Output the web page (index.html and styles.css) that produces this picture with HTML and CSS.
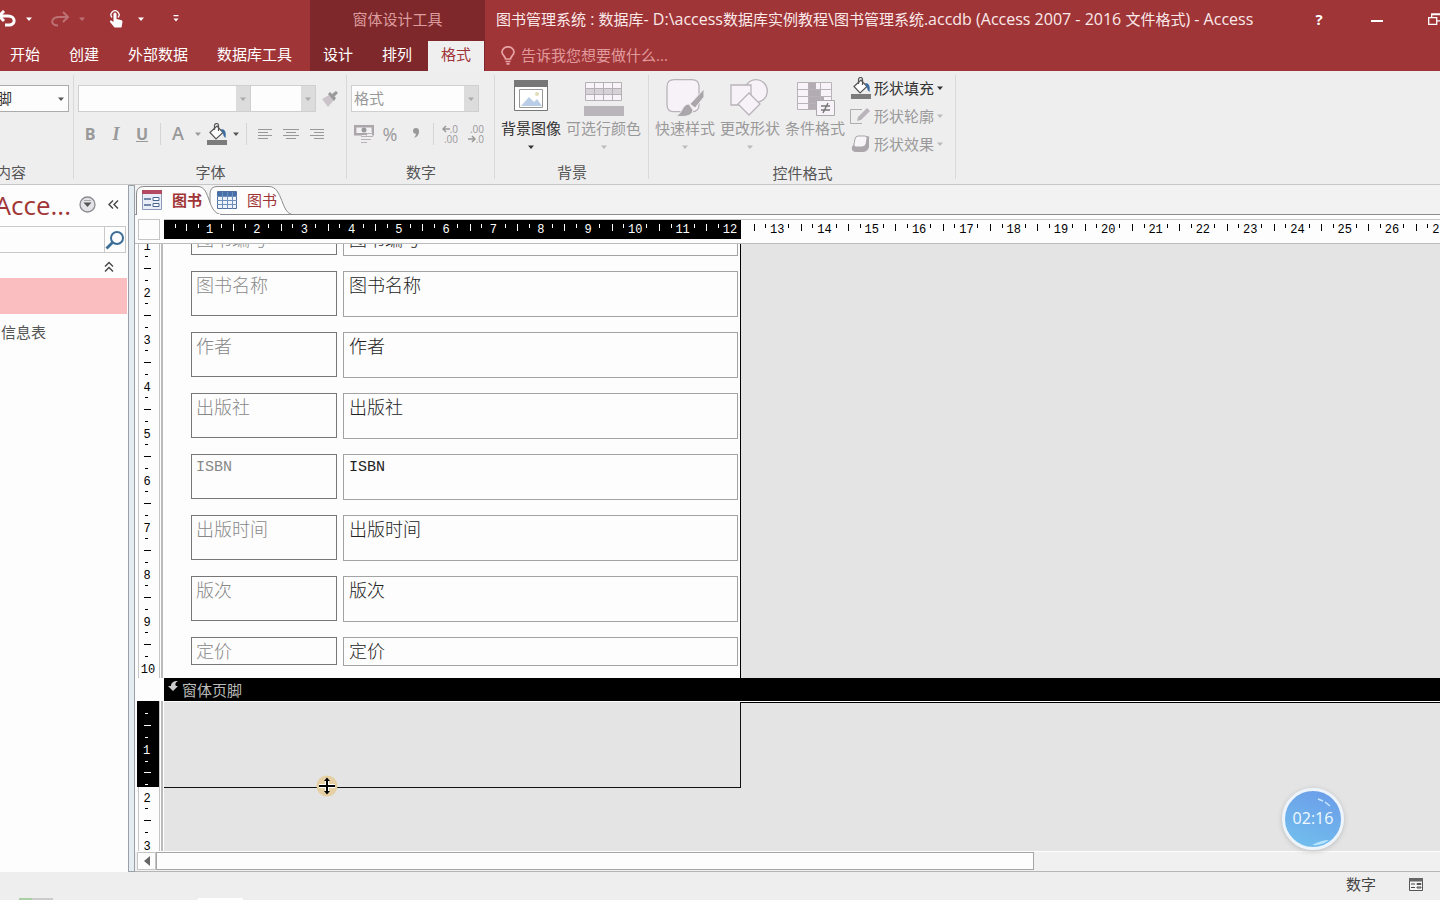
FILE: index.html
```html
<!DOCTYPE html>
<html lang="zh-CN">
<head>
<meta charset="utf-8">
<title>图书管理系统 - Access</title>
<link rel="stylesheet" href="styles.css">
</head>
<body>
<svg class="symbols" aria-hidden="true">
  <symbol id="caret" viewBox="0 0 8 8"><path d="M1 2.5h6L4 6z" fill="currentColor"/></symbol>
  <symbol id="bucket" viewBox="0 0 22 22"><path d="M4 9.5 11 3l6 6.500-7 6.500z" fill="#fff" stroke="#555" stroke-width="1.200"/><path d="M8.500 7V2.500a2 2 0 0 1 4 0V8" fill="none" stroke="#555" stroke-width="1.200"/><path d="M15 6c4 0 5.500 3 4.500 9-1.500-1-2.500-3-2.500-5z" fill="#3c6ea5"/><path d="M1 17h20v5H1z" fill="#7b7b7b"/></symbol>
</svg>

<header class="titlebar">
  <div class="title-left">
    <div class="quick">
      <div class="quick-group">
        <button aria-label="撤消"><svg width="16" height="18" viewBox="0 0 16 18" fill="none" stroke="#fff" stroke-width="3"><path d="M-1 6h9c8 0 8 9 1 9H5M4 1-1 6l5 5"/></svg></button>
        <button aria-label="撤消选项"><svg width="8" height="8"><use href="#caret"/></svg></button>
      </div>
      <div class="quick-group faded">
        <button aria-label="恢复"><svg width="18" height="18" viewBox="0 0 18 18" fill="none" stroke="#fff" stroke-width="2"><path d="M17 7H9C-1 7-1 15.500 7 15.500M12 2l5 5-5 5"/></svg></button>
        <button aria-label="恢复选项"><svg width="8" height="8"><use href="#caret"/></svg></button>
      </div>
      <div class="quick-group">
        <button class="touch" aria-label="触摸模式"><svg width="14" height="18" viewBox="0 0 14 18" fill="#fff"><path d="M4.500 4a1.500 1.500 0 0 1 3 0v5l4.500 1c1 .3 1.500 1 1.500 2l-1 5.500H5.500L1 12c-.5-1 .8-2 2-1l1.500 1z"/><path d="M3 7.500a4 4 0 1 1 6 0" fill="none" stroke="#fff" stroke-width="1.300"/></svg></button>
        <button aria-label="触摸选项"><svg width="8" height="8"><use href="#caret"/></svg></button>
      </div>
      <button class="customize" aria-label="自定义快速访问工具栏"><svg width="8" height="8" viewBox="0 0 8 8" fill="#fff"><path d="M1.500 0h5v1.200h-5zM1.500 3.500h5L4 6.500z"/></svg></button>
    </div>
    <nav class="tabs left-tabs">
      <button>开始</button><button>创建</button><button>外部数据</button><button>数据库工具</button>
    </nav>
  </div>
  <div class="title-context">
    <div class="context-name">窗体设计工具</div>
    <nav class="tabs context-tabs">
      <button>设计</button><button>排列</button><button class="active">格式</button>
    </nav>
  </div>
  <div class="title-right">
    <div class="title-row">
      <h1>图书管理系统<span> : </span>数据库<span>- D:\access</span>数据库实例教程<span>\</span>图书管理系统<span>.accdb (Access 2007 - 2016 </span>文件格式<span>) - Access</span></h1>
      <div class="window-buttons">
        <button aria-label="帮助" class="help">?</button>
        <button aria-label="最小化"><svg width="12" height="12" viewBox="0 0 12 12"><path d="M0 7h12v2H0z" fill="#fff"/></svg></button>
        <button aria-label="还原"><svg width="14" height="12" viewBox="0 0 14 12" fill="none" stroke="#fff" stroke-width="1.300"><path d="M.7 4.700h8v6.600h-8zM3.700 4.500V.8h9v7H9M4 1.500h8"/></svg></button>
      </div>
    </div>
    <label class="tell"><svg width="14" height="19" viewBox="0 0 14 19" fill="none" stroke="#e7a3a5" stroke-width="1.700"><path d="M4.500 13c0-3-3.500-3.500-3.500-7a6 5.200 0 0 1 12 0c0 3.500-3.500 4-3.500 7zM4.500 15.500h5M5.500 17.800h3"/></svg><input type="text" placeholder="告诉我您想要做什么..." aria-label="告诉我您想要做什么"></label>
  </div>
</header>

<section class="ribbon" aria-label="格式">
  <div class="group g-select">
    <div class="row"><span class="combo live"><select aria-label="所选内容"><option>脚</option></select><i><svg width="8" height="8"><use href="#caret"/></svg></i></span></div>
    <div class="group-name">内容</div>
  </div>
  <div class="group g-font">
    <div class="row">
      <span class="combo font-name"><select aria-label="字体" disabled><option></option></select><i><svg width="8" height="8"><use href="#caret"/></svg></i></span><span class="combo font-size"><select aria-label="字号" disabled><option></option></select><i><svg width="8" height="8"><use href="#caret"/></svg></i></span>
      <button class="painter" aria-label="格式刷" disabled><svg width="18" height="18" viewBox="0 0 18 18"><path d="M1 9 8 5l5 5-6 7z" fill="#cbc5c9"/><path d="m7 4 2-2 6 6-2 3z" fill="#999"/><path d="m11 4 4-3 2 2-4 4z" fill="#999"/></svg></button>
    </div>
    <div class="tools">
      <button class="tool letter bold" disabled>B</button><button class="tool letter italic" disabled>I</button><button class="tool letter underline" disabled>U</button>
      <span class="sep"></span>
      <button class="tool letter big" disabled>A</button><button class="drop" disabled aria-label="字体颜色"><svg width="8" height="8"><use href="#caret"/></svg></button>
      <button class="tool fill" aria-label="背景色"><svg width="22" height="22"><use href="#bucket"/></svg></button><button class="drop dark" aria-label="背景色选项"><svg width="8" height="8"><use href="#caret"/></svg></button>
      <span class="sep"></span>
      <button class="tool" disabled aria-label="左对齐"><svg width="16" height="14" viewBox="0 0 16 14" stroke="#999"><path d="M1 2.500h14M1 5.500h10M1 8.500h14M1 11.500h10"/></svg></button><button class="tool" disabled aria-label="居中"><svg width="16" height="14" viewBox="0 0 16 14" stroke="#999"><path d="M0 2.500h16M3 5.500h10M0 8.500h16M3 11.500h10"/></svg></button><button class="tool" disabled aria-label="右对齐"><svg width="16" height="14" viewBox="0 0 16 14" stroke="#999"><path d="M1 2.500h14M5 5.500h10M1 8.500h14M5 11.500h10"/></svg></button>
    </div>
    <div class="group-name">字体</div>
  </div>
  <div class="group g-number">
    <div class="row"><span class="combo number-format"><select aria-label="格式" disabled><option>格式</option></select><i><svg width="8" height="8"><use href="#caret"/></svg></i></span></div>
    <div class="tools">
      <button class="tool" disabled aria-label="货币"><svg width="20" height="20" viewBox="0 0 20 20"><path d="M1.200 2.200h17.600v8H1.200z" fill="#f3f1f3" stroke="#aaa6aa" stroke-width="2.400"/><circle cx="10" cy="6" r="2.500" fill="#999"/><path d="M8 11h4v8H8zM13 8h5v8h-5z" fill="#eee"/><path d="M7 12.500h6M7 15.500h6M7 18.500h6M13 9.500h6M13 12.500h6M13 15.500h4" stroke="#b9b3b9"/></svg></button><button class="tool percent" disabled>%</button><button class="tool" disabled aria-label="千位分隔"><svg width="8" height="12" viewBox="0 0 8 12"><path d="M1 3a3 3 0 0 1 6 0c0 4-2 6-5 7 1.500-2 2-3 1.800-4.200C2 5.800 1 4.500 1 3z" fill="#999"/></svg></button>
      <span class="sep"></span>
      <button class="tool decimals" disabled aria-label="增加小数位数"><span><svg width="8" height="8" viewBox="0 0 8 8" fill="none" stroke="#999" stroke-width="1.500"><path d="M8 4H1m3-3L1 4l3 3"/></svg>.0</span><span>.00</span></button><button class="tool decimals" disabled aria-label="减少小数位数"><span>.00</span><span><svg width="8" height="8" viewBox="0 0 8 8" fill="none" stroke="#999" stroke-width="1.500"><path d="M0 4h7M4 1l3 3-3 3"/></svg>.0</span></button>
    </div>
    <div class="group-name">数字</div>
  </div>
  <div class="group g-back">
    <div class="bigs">
      <button class="big-button"><svg width="40" height="38" viewBox="0 0 40 38"><path d="M3.500 3.500h33v28h-33z" fill="#fff" stroke="#777"/><path d="M3 1h34v7H3z" fill="#777"/><path d="M8.500 10.500h23v18h-23z" fill="#fff" stroke="#999"/><path d="m10 27 8-9 5 5 3-3 5 7z" fill="#b9cde6"/><circle cx="26" cy="15" r="2" fill="#e2dcb8"/></svg>背景图像<svg width="8" height="8"><use href="#caret"/></svg></button>
      <button class="big-button" disabled><svg width="40" height="38" viewBox="0 0 40 38"><path d="M1.500 3.500h36v18h-36z" fill="#f8f3f8"/><path d="M2 9h35v6H2z" fill="#d6d2d6"/><path d="M1.500 3.500h36v18h-36zM1 9.500h37M1 15.500h37M10.500 3v19M19.500 3v19M28.500 3v19" fill="none" stroke="#b5b0b5"/><path d="M0 27h40v10H0z" fill="#bab5ba"/></svg>可选行颜色<svg width="8" height="8"><use href="#caret"/></svg></button>
    </div>
    <div class="group-name">背景</div>
  </div>
  <div class="group g-control">
    <div class="bigs">
      <button class="big-button" disabled><svg width="40" height="38" viewBox="0 0 40 38"><path d="M9 .7h18q7 0 7 7v18q0 7-7 7H9q-7 0-7-7v-18q0-7 7-7z" fill="#f7f2f7" stroke="#b9b3b9" stroke-width="1.300"/><path d="M39 10v8l-9 11-5-4z" fill="#aaa6aa" stroke="#eee"/><path d="M24 25c-7 0-6 9-13 12 7 1 16 1 17-6z" fill="#aaa6aa" stroke="#eee"/></svg>快速样式<svg width="8" height="8"><use href="#caret"/></svg></button>
      <button class="big-button" disabled><svg width="40" height="38" viewBox="0 0 40 38" fill="#f7f2f7" stroke="#b9b3b9" stroke-width="1.300"><circle cx="26" cy="12" r="11.300"/><path d="M1 6h20v20H1z"/><path d="m19 14 11 11-11 11L8 25z"/></svg>更改形状<svg width="8" height="8"><use href="#caret"/></svg></button>
      <button class="big-button" disabled><svg width="40" height="38" viewBox="0 0 40 38"><path d="M2.500 3.500h34v27h-34z" fill="#f8f3f8"/><path d="M13 3h8v7h4v7h4v7h-8v7h-8z" fill="#b3adb3"/><path d="M2.500 3.500h34v27h-34zM2 10.500h34M2 17.500h34M2 24.500h34M13.500 3v28M25.500 3v28" fill="none" stroke="#b9b3b9"/><path d="M21.500 21.500h18v15h-18z" fill="#f8f3f8" stroke="#aaa"/><path d="M26 27h9M26 31h9M33 24l-5 10" stroke="#777" stroke-width="1.500"/></svg>条件格式</button>
      <div class="shape-list">
        <button><svg width="22" height="22"><use href="#bucket"/></svg>形状填充<svg width="8" height="8"><use href="#caret"/></svg></button>
        <button disabled><svg width="22" height="22" viewBox="0 0 22 22" fill="none" stroke="#b0abb0"><path d="M12 4.500H.5v14H12"/><path d="m7 16 1-4 9-9 3 3-9 9z" fill="#b9b4b9" stroke="none"/></svg>形状轮廓<svg width="8" height="8"><use href="#caret"/></svg></button>
        <button disabled><svg width="22" height="22" viewBox="0 0 22 22"><path d="M8 3h9q3 0 2 3v8q-1 4-5 5H5q-4-1-3-5z" fill="#aaa6aa"/><path d="M8 3h7q3 0 2 3l-1 5q-1 3-4 3H6q-3 0-2-3l1-5q.5-3 3-3z" fill="#f8f5f8" stroke="#aaa6aa"/></svg>形状效果<svg width="8" height="8"><use href="#caret"/></svg></button>
      </div>
    </div>
    <div class="group-name">控件格式</div>
  </div>
</section>

<main>
  <aside class="nav-pane">
    <div class="nav-head">
      <h2>Acce...</h2>
      <button aria-label="浏览类别"><svg width="17" height="17" viewBox="0 0 17 17"><circle cx="8.500" cy="8.500" r="7.500" fill="#e4e4e8" stroke="#8b8b90" stroke-width="1.300"/><path d="M4.500 6.500h8l-4 4.500z" fill="#555"/><path d="M5 4.500h7" stroke="#aaa"/></svg></button>
      <button aria-label="折叠导航窗格"><svg width="11" height="11" viewBox="0 0 11 11" fill="none" stroke="#444" stroke-width="1.400"><path d="M5 1.500 1 5.500l4 4M10 1.500l-4 4 4 4"/></svg></button>
    </div>
    <div class="search">
      <input type="text" aria-label="搜索">
      <button aria-label="搜索"><svg width="20" height="20" viewBox="0 0 20 20" fill="none" stroke="#3d6e98"><circle cx="12" cy="8" r="6" stroke-width="2"/><path d="m7.500 12.500-6 6" stroke-width="2.800"/></svg></button>
    </div>
    <button class="nav-group" aria-label="表"><svg width="10" height="12" viewBox="0 0 10 12" fill="none" stroke="#444" stroke-width="1.400"><path d="m1 5.500 4-4 4 4M1 10.500l4-4 4 4"/></svg></button>
    <button class="nav-item selected" aria-label="图书"></button>
    <button class="nav-item">信息表</button>
  </aside>
  <div class="splitter"></div>

  <section class="workspace">
    <div class="doc-tabs">
      <svg class="tab-shapes" width="170" height="30" viewBox="0 0 170 30" fill="#fdfdfd" stroke="#8c8c8c"><path d="M74 29.500V9q0-7.500 7-7.500h52c14 0 12 28 24 28z"/><path d="M.5 30.500V9Q.5 1.500 8 1.500h54c13 0 9 28 24 28V31z"/><path d="M1 30h83" stroke="#fdfdfd" stroke-width="2"/></svg>
      <button class="doc-tab current"><svg width="20" height="20" viewBox="0 0 20 20"><path d="M.5.5h19v19H.5z" fill="#e8edf7" stroke="#8c9ab8"/><path d="M0 0h20v4H0z" fill="#b34a61"/><path d="M2 9h7M2 15h7" stroke="#4c658f" stroke-width="1.500"/><path d="M11 7.500h6v3h-6zM11 13.500h6v3h-6z" fill="#fff" stroke="#4c658f"/></svg>图书</button>
      <button class="doc-tab"><svg width="20" height="18" viewBox="0 0 20 18"><path d="M.5.5h19v17H.5z" fill="#eff4fb" stroke="#53719f"/><path d="M1 1h18v4H1z" fill="#4770aa"/><path d="M0 5.500h20M0 9.500h20M0 13.500h20M5.500 1v17M10.500 1v17M15.500 1v17" stroke="#6e8fba"/></svg>图书</button>
    </div>
    <div class="ruler-row">
      <div class="corner"></div>
      <div class="ruler-h">
        <div class="ruler-used"></div>
        <div class="marks"><span class="origin"></span><b>1</b><b>2</b><b>3</b><b>4</b><b>5</b><b>6</b><b>7</b><b>8</b><b>9</b><b>10</b><b>11</b><b>12</b><b class="ink">13</b><b class="ink">14</b><b class="ink">15</b><b class="ink">16</b><b class="ink">17</b><b class="ink">18</b><b class="ink">19</b><b class="ink">20</b><b class="ink">21</b><b class="ink">22</b><b class="ink">23</b><b class="ink">24</b><b class="ink">25</b><b class="ink">26</b><b class="ink">27</b></div>
      </div>
    </div>
    <div class="design">
      <div class="section detail-section">
        <div class="ruler-v"><b>1</b><b>2</b><b>3</b><b>4</b><b>5</b><b>6</b><b>7</b><b>8</b><b>9</b><b class="last">10</b></div>
        <form class="detail">
          <div class="field first"><label for="f0">图书编号</label><input id="f0" value="图书编号"></div>
          <div class="field"><label for="f1">图书名称</label><input id="f1" value="图书名称"></div>
          <div class="field"><label for="f2">作者</label><input id="f2" value="作者"></div>
          <div class="field"><label for="f3">出版社</label><input id="f3" value="出版社"></div>
          <div class="field latin"><label for="f4">ISBN</label><input id="f4" value="ISBN"></div>
          <div class="field"><label for="f5">出版时间</label><input id="f5" value="出版时间"></div>
          <div class="field"><label for="f6">版次</label><input id="f6" value="版次"></div>
          <div class="field short"><label for="f7">定价</label><input id="f7" value="定价"></div>
        </form>
      </div>
      <div class="section bar-section">
        <div class="ruler-gap"></div>
        <div class="section-bar"><svg width="11" height="11" viewBox="0 0 11 11"><path d="M0 6h3c0-3 2-5 7-5-3 2-3 3-2 5h2l-5 5z" fill="#ccc"/></svg>窗体页脚</div>
      </div>
      <div class="section footer-section">
        <div class="ruler-v footer-ruler"><div class="ruler-active"><span class="lead"></span><b>1</b></div><b>2</b><b>3</b></div>
        <div class="footer-canvas"><div class="footer-area"></div><svg class="cursor" width="24" height="24" viewBox="0 0 24 24"><circle cx="12" cy="12" r="10.500" fill="#e5cfa3"/><path d="M4 12h16M12 5v14" stroke="#fff" stroke-width="4"/><path d="M4 12h16M12 5v14" stroke="#000" stroke-width="2"/><path d="m9 7 3-3.500L15 7zM9 17l3 3.500 3-3.500z"/></svg></div>
      </div>
    </div>
    <div class="scrollbar"><button aria-label="向左滚动"><svg width="6" height="10" viewBox="0 0 6 10"><path d="M6 0v10L0 5z" fill="#666"/></svg></button><div class="thumb"></div></div>
    <div class="timer">02:16<svg width="56" height="56" viewBox="0 0 56 56" fill="none" stroke="#c9e8ff"><path d="m33 8 5 2m2 1 5 4" stroke-width="1.500"/><path d="M27 54q10-5 17-5-7 6-17 5z" fill="#b9e6ff" stroke="none"/></svg></div>
  </section>
</main>

<footer class="status">
  <span>数字</span>
  <button aria-label="窗体视图"><svg width="14" height="13" viewBox="0 0 14 13"><path d="M.5.500h13v12H.5z" fill="#f5f5f5" stroke="#555"/><path d="M0 0h14v3.500H0z" fill="#666"/><path d="M2 6h4M2 9.500h4" stroke="#444"/><path d="M8 5.500h4v1H8zM8 9h4v1H8z" stroke="#555" fill="none"/></svg></button>
</footer>
</body>
</html>
```

FILE: styles.css
```css
* { box-sizing: border-box; }

body {
  margin: 0;
  height: 100vh;
  overflow: hidden;
  display: flex;
  flex-direction: column;
  background: #ededed;
  color: #444;
  font: 15px/20px "Open Sans", "Noto Sans CJK SC", sans-serif;
}

button, input, select { font: inherit; color: inherit; }
button { margin: 0; padding: 0; border: 0; background: none; display: flex; align-items: center; justify-content: center; }
button:disabled { color: #999; }
svg { display: block; flex: none; }
.symbols { position: absolute; width: 0; height: 0; }
h1, h2 { margin: 0; font-weight: 400; }

/* Title bar and ribbon tabs */
.titlebar { display: flex; flex: none; background: #a03538; color: #fff; overflow: hidden; }
.title-left { width: 310px; }
.quick { height: 39px; display: flex; align-items: center; gap: 18px; padding-bottom: 1px; }
.quick-group { display: flex; align-items: center; gap: 9px; }
.faded { opacity: .3; }
.touch { width: 24px; }
.customize { width: 26px; }
.tabs { display: flex; height: 32px; }
.tabs button { padding-bottom: 3px; }
.left-tabs { padding-left: 10px; gap: 29px; }
.title-context { width: 175px; background: #7f282b; display: flex; flex-direction: column; }
.context-name { height: 41px; line-height: 39px; text-align: center; color: #dc9c9e; }
.context-tabs { height: 30px; gap: 3px; }
.context-tabs button { padding: 0 13px 4px; }
.context-tabs .active { background: #f0eff0; color: #a03538; }
.title-right { flex: 1; min-width: 0; }
.title-row { height: 39px; display: flex; align-items: center; justify-content: space-between; padding: 0 0 2px 11px; }
.title-row h1 { font-size: 15px; color: #fbe9e9; white-space: nowrap; }
.title-row h1 span { font-size: 16px; }
.window-buttons { display: flex; flex: none; margin-right: -24px; }
.window-buttons button { width: 58px; height: 38px; }
.help { font-weight: 700; }
.tell { display: flex; align-items: center; gap: 6px; height: 32px; padding-left: 16px; }
.tell input { width: 240px; padding: 0; border: 0; background: none; }
.tell input::placeholder { color: #e09a9c; opacity: 1; }

/* Ribbon */
.ribbon { display: flex; flex: none; height: 114px; border-bottom: 1px solid #c6c6c6; background: #efeeef; }
.group { display: flex; flex-direction: column; padding: 14px 4px 2px; background: linear-gradient(#d9d9d9, #d9d9d9) right 4px / 1px 104px no-repeat; }
.group-name { margin-top: auto; text-align: center; color: #555; }
.row { display: flex; height: 27px; align-items: center; }
.g-select { width: 74px; padding-left: 0; }
.g-select .group-name { text-align: left; margin-left: -4px; }
.g-font { width: 273px; }
.g-number { width: 148px; }
.g-back { width: 154px; padding: 8px 6px 2px; }
.g-control { width: 307px; padding: 8px 6px 2px; }
.combo { display: flex; height: 27px; border: 1px solid #cfcfcf; background: #fdfdfd; }
.combo select { flex: 1; min-width: 0; padding: 0 2px 2px; border: 0; background: none; appearance: none; color: #999; opacity: 1; }
.combo i { width: 14px; display: flex; align-items: center; justify-content: center; background: #dcdcdc; color: #aaa; }
.combo.live { width: 73px; margin-left: -4px; border-color: #ababab; }
.combo.live select { color: #333; padding: 0 0 2px; }
.combo.live i { background: none; color: #555; }
.font-name { width: 173px; }
.font-size { width: 65px; border-left: 0; }
.number-format { width: 128px; }
.painter { margin-left: 5px; }
.tools { display: flex; align-items: center; height: 44px; }
.tool { width: 26px; height: 26px; }
.sep { width: 1px; height: 22px; margin: 0 5px 0 4px; background: #d5d5d5; }
.drop { width: 12px; height: 26px; }
.dark { color: #555; }
.letter { font-size: 16px; font-weight: 700; padding-right: 2px; }
.italic { font-family: "Liberation Serif", serif; font-style: italic; font-size: 18px; }
.underline { text-decoration: underline; }
.big { font-size: 18px; font-weight: 600; padding-bottom: 3px; }
.percent { font-size: 18px; }
.decimals { flex-direction: column; align-items: flex-end; padding-right: 7px; font-size: 10px; line-height: 10px; }
.decimals span { display: flex; align-items: center; }
.bigs { display: flex; gap: 5px; }
.big-button { flex-direction: column; justify-content: flex-start; color: #333; }
.big-button svg:first-child { height: 38px; margin-bottom: 1px; }
.big-button svg:last-child { margin-top: 5px; }
.big-button svg:only-child { margin-top: 0; }
.big-button:disabled svg:last-child, .shape-list button:disabled svg:last-child { color: #bbb; }
.shape-list { display: flex; flex-direction: column; }
.shape-list button { height: 28px; padding-bottom: 10px; color: #333; gap: 2px; }
.shape-list button:disabled { color: #999; }

/* Navigation pane */
main { flex: 1; min-height: 0; display: flex; }
.nav-pane { width: 128px; flex: none; background: #fdfdfd; overflow: hidden; display: flex; flex-direction: column; }
.nav-head { height: 41px; display: flex; align-items: center; justify-content: flex-end; gap: 6px; padding: 0 5px 2px 0; }
.nav-head button { width: 20px; flex: none; }
.nav-head h2 { flex: none; font-size: 26px; line-height: 36px; color: #a03538; }
.search { display: flex; height: 27px; margin-right: 2px; border: 1px solid #c9c9c9; border-left: 0; }
.search input { flex: 1; min-width: 0; border: 0; background: none; }
.search button { width: 21px; border-left: 1px solid #c9c9c9; }
.nav-group { align-self: flex-end; width: 38px; height: 25px; padding-top: 3px; }
.nav-item { height: 36px; margin-right: 1px; padding-left: 1px; justify-content: flex-start; color: #555; }
.selected { background: #fabec1; }
.splitter { width: 7px; flex: none; border: 1px solid #9aa0a8; background: #e6edf2; }

/* Document area */
.workspace { flex: 1; min-width: 0; display: flex; flex-direction: column; position: relative; background: #fdfdfd; overflow: hidden; }
.doc-tabs { position: relative; height: 30px; flex: none; display: flex; align-items: center; border-bottom: 1px solid #8c8c8c; background: #f3f2f3; }
.tab-shapes { position: absolute; left: 1px; top: 0; }
.doc-tab { position: relative; gap: 10px; width: 75px; color: #a03538; justify-content: flex-start; margin-left: 7px; }
.doc-tab + .doc-tab { margin-left: 0; }
.current { font-weight: 700; }
.ruler-row { display: flex; flex: none; height: 29px; padding: 4px 0 0 3px; border-bottom: 1px solid #bbb; }
.corner { width: 22px; height: 21px; margin-right: 4px; flex: none; border: 1px solid #c5c5c5; }
.ruler-h { flex: 1; min-width: 0; height: 20px; position: relative; overflow: hidden; border-top: 1px solid #c5c5c5; }
.ruler-used { position: absolute; left: 0; top: -1px; width: 577px; height: 20px; background: #000; }
.marks { position: relative; display: flex; width: 1299px; height: 20px; color: #fff; }
.marks .origin { width: 22px; flex: none; background: linear-gradient(#fff, #fff) 50% 4px / 1px 4px no-repeat; }
.marks b { flex: 1; text-align: center; font: 12px/20px "Liberation Mono", monospace; background: linear-gradient(currentColor, currentColor) 0 4px / 1px 7px no-repeat, linear-gradient(currentColor, currentColor) 25% 4px / 1px 4px no-repeat, linear-gradient(currentColor, currentColor) 75% 4px / 1px 4px no-repeat; }
.marks .ink { color: #000; }

.design { flex: 1; min-height: 0; display: flex; flex-direction: column; background: #e4e4e4; overflow: hidden; }
.section { display: flex; }
.detail-section { height: 434px; flex: none; }
.ruler-v { width: 29px; flex: none; display: flex; flex-direction: column; justify-content: flex-end; overflow: hidden; color: #000; background: linear-gradient(90deg, #fdfdfd 3px, #c5c5c5 3px 4px, #fdfdfd 4px 24px, #c5c5c5 24px 25px, #fdfdfd 25px 26px, #bbb 26px 28px, #fdfdfd 28px); }
.ruler-v b, .lead { height: 47px; flex: none; font: 12px/14px "Liberation Mono", monospace; text-align: center; padding-right: 5px; background: linear-gradient(currentColor, currentColor) 10px 16px / 3px 1px no-repeat, linear-gradient(currentColor, currentColor) 9px 28px / 7px 1px no-repeat, linear-gradient(currentColor, currentColor) 10px 40px / 3px 1px no-repeat; }
.ruler-v .last { height: 15px; padding-right: 3px; background: none; }
.detail { width: 577px; flex: none; display: flex; flex-direction: column; justify-content: flex-end; gap: 15px; padding: 0 2px 12px 27px; border-right: 1px solid #000; background: #fdfdfd; overflow: hidden; }
.field { display: grid; grid-template-columns: 146px 1fr; gap: 6px; height: 46px; flex: none; align-items: start; font: 300 18px/24px "Noto Sans CJK SC", sans-serif; }
.field label { height: 45px; padding: 0 4px; border: 1px solid #777; color: #888; }
.field input { width: 100%; height: 46px; margin: 0; padding: 0 5px 20px; border: 1px solid #a3a3a3; border-radius: 0; background: none; color: #222; }
.short, .short input { height: 29px; }
.short input { padding-bottom: 3px; }
.short label { height: 28px; }
.first, .first input { height: 31px; }
.first input { padding-bottom: 5px; }
.first label { height: 30px; }
.latin label, .latin input { font-family: "Liberation Mono", monospace; font-size: 15px; line-height: 26px; }
.bar-section { height: 23px; flex: none; }
.ruler-gap { width: 29px; flex: none; background: #fdfdfd; }
.section-bar { flex: 1; display: flex; gap: 3px; padding: 2px 4px; background: #000; color: #bbb; }
.footer-section { flex: 1; min-height: 0; }
.footer-ruler { justify-content: flex-start; }
.ruler-active { display: flex; flex-direction: column; margin: 0 5px 0 2px; height: 86px; flex: none; overflow: hidden; background: #000; color: #fff; }
.ruler-active b { padding-right: 3px; background-position: 8px 17px, 7px 28px, 8px 40px; }
.lead { height: 43px; background-position: 8px 12px, 7px 24px, 8px 36px; }
.footer-ruler > b { margin-top: 5px; height: 43px; }
.footer-canvas { flex: 1; position: relative; border-top: 1px solid #fdfdfd; background: linear-gradient(#000, #000) 577px 0 / 100% 1px no-repeat; }
.footer-area { width: 577px; height: 86px; border: solid #111; border-width: 0 1px 1px 0; }
.cursor { position: absolute; left: 151px; top: 72px; }
.scrollbar { flex: none; display: flex; height: 21px; padding: 0 0 1px 2px; border-bottom: 1px solid #b5b5b5; border-top: 1px solid #fdfdfd; background: #f0f0f0; }
.scrollbar button { width: 19px; border: 1px solid #c5c5c5; background: #fdfdfd; }
.thumb { width: 68%; max-width: 878px; border: 1px solid #a5a5a5; background: #fdfdfd; }
.timer { position: absolute; right: 96px; bottom: 22px; width: 62px; height: 62px; padding-bottom: 2px; display: flex; align-items: center; justify-content: center; border: 3px solid #edf4fb; border-radius: 50%; background: linear-gradient(20deg, #73c1ee, #6a9be8); box-shadow: 0 1px 5px #bbb; color: #f0faff; font-size: 16px; }
.timer svg { position: absolute; left: 0; top: 0; }

/* Status bar */
.status { flex: none; height: 28px; display: flex; align-items: center; justify-content: flex-end; gap: 33px; padding: 0 17px 4px; background: linear-gradient(90deg, transparent 19px, #a9cfa5 19px 32px, #ccc 32px 53px, transparent 53px 198px, #fff 198px 243px, transparent 243px) 0 100% / 100% 2px no-repeat #eee; }
```
